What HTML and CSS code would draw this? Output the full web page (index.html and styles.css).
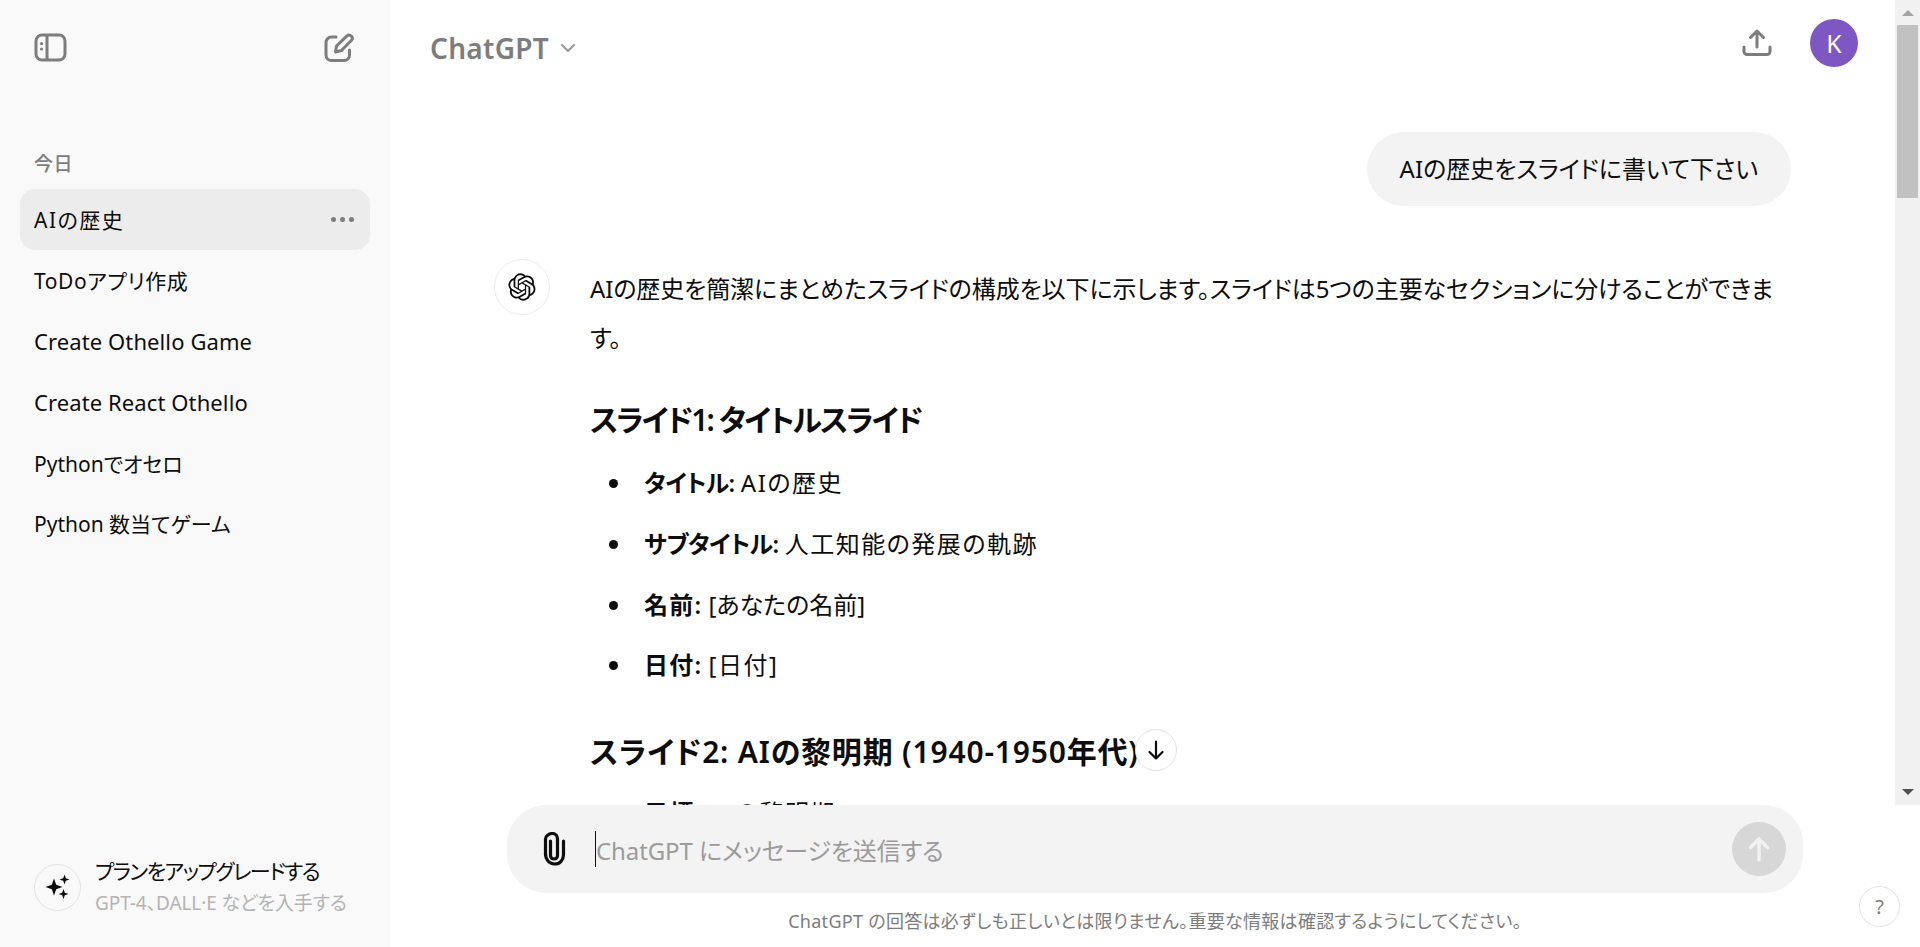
FILE: index.html
```html
<!DOCTYPE html>
<html lang="ja">

	<head>
		<meta charset="UTF-8">
		<title>ChatGPT</title>
		<link rel="stylesheet" href="styles.css">
	</head>

	<body>
		<div class="app">
			<aside class="sidebar">
				<div class="side-top">
					<svg class="icon-panel" width="34" height="30" viewBox="0 0 34 30" fill="none" stroke="#7d7d7d" stroke-width="3">
						<rect x="2" y="2" width="29" height="25" rx="6"/>
						<path d="M13 2v25"/>
						<circle cx="7.5" cy="10.5" r="1.6" fill="#7d7d7d" stroke="none"/>
						<circle cx="7.5" cy="16" r="1.6" fill="#7d7d7d" stroke="none"/>
					</svg>
					<svg class="icon-edit" width="30" height="30" viewBox="0 0 30 30" fill="none" stroke="#7d7d7d" stroke-width="3" stroke-linecap="round" stroke-linejoin="round">
						<path d="M12 4H7.5A5.5 5.5 0 0 0 2 9.500V22a5.500 5.500 0 0 0 5.500 5.500H20a5.500 5.500 0 0 0 5.500-5.500v-5"/>
						<path d="M23 2.800a3.200 3.200 0 0 1 4.500 4.500L17.500 17.500l-6 1.500 1-6z"/>
					</svg>
				</div>

				<div class="side-label">今日</div>
				<ul class="side-list">
					<li class="side-item active"><span class="wide">AIの歴史</span><span class="dots"><i></i><i></i><i></i></span></li>
					<li class="side-item"><span class="wide-s">ToDoアプリ作成</span></li>
					<li class="side-item latin">Create Othello Game</li>
					<li class="side-item latin">Create React Othello</li>
					<li class="side-item">Pythonでオセロ</li>
					<li class="side-item">Python 数当てゲーム</li>
				</ul>

				<div class="upgrade">
					<div class="upgrade-icon">
						<svg width="30" height="30" viewBox="0 0 30 30" fill="#0d0d0d">
							<path d="M11 6.500l2.200 6.300 6.300 2.200-6.300 2.200L11 23.500l-2.200-6.300L2.500 15l6.300-2.200z"/>
							<path d="M21.500 2.500l1.300 3.700 3.700 1.300-3.700 1.300-1.300 3.700-1.300-3.700-3.700-1.300 3.700-1.300z"/>
							<path d="M20.500 17l1.300 3.700 3.700 1.300-3.700 1.300-1.300 3.700-1.300-3.700-3.700-1.300 3.700-1.300z"/>
						</svg>
					</div>
					<div>
						<div class="upgrade-title">プランをアップグレードする</div>
						<div class="upgrade-sub">GPT-4、DALL·E などを入手する</div>
					</div>
				</div>
			</aside>

			<main class="main">
				<div class="thread-wrap">
					<div class="thread">
						<header class="topbar">
							<div class="model">ChatGPT
								<svg width="18" height="18" viewBox="0 0 18 18" fill="none" stroke="#9b9b9b" stroke-width="2.200" stroke-linecap="round" stroke-linejoin="round"><path d="M3 6l6 6 6-6"/></svg>
							</div>
							<svg class="icon-share" width="30" height="30" viewBox="0 0 30 30" fill="none" stroke="#7d7d7d" stroke-width="3" stroke-linecap="round" stroke-linejoin="round">
								<path d="M15 19V3M8.500 9.500L15 3l6.500 6.500"/>
								<path d="M2 19v4.500a3 3 0 0 0 3 3h20a3 3 0 0 0 3-3V19"/>
							</svg>
							<div class="avatar">K</div>
						</header>

						<div class="user-row">
							<div class="bubble">AIの歴史をスライドに書いて下さい</div>
						</div>

						<div class="answer">
							<div class="gpt-icon">
								<svg width="28" height="28" viewBox="0 0 41 41" fill="#0d0d0d">
									<path d="M37.5324 16.8707C37.9808 15.5241 38.1363 14.0974 37.9886 12.6859C37.8409 11.2744 37.3934 9.91076 36.676 8.68622C35.6126 6.83404 33.9882 5.3676 32.0373 4.4985C30.0864 3.62941 27.9098 3.40259 25.8215 3.85078C24.8796 2.7893 23.7219 1.94125 22.4257 1.36341C21.1295 0.785575 19.7249 0.491269 18.3058 0.500197C16.1708 0.495044 14.0893 1.16803 12.3614 2.42214C10.6335 3.67624 9.34853 5.44666 8.6917 7.47815C7.30085 7.76286 5.98686 8.3414 4.8377 9.17505C3.68854 10.0087 2.73073 11.0782 2.02839 12.312C0.956464 14.1591 0.498905 16.2988 0.721698 18.4228C0.944492 20.5467 1.83612 22.5449 3.268 24.1293C2.81966 25.4759 2.66413 26.9026 2.81182 28.3141C2.95951 29.7256 3.40701 31.0892 4.12437 32.3138C5.18791 34.1659 6.8123 35.6322 8.76321 36.5013C10.7141 37.3704 12.8907 37.5973 14.9789 37.1492C15.9208 38.2107 17.0786 39.0587 18.3747 39.6366C19.6709 40.2144 21.0755 40.5087 22.4946 40.4998C24.6307 40.5054 26.7133 39.8321 28.4418 38.5772C30.1704 37.3223 31.4556 35.5506 32.1119 33.5179C33.5027 33.2332 34.8167 32.6547 35.9659 31.821C37.115 30.9874 38.0728 29.9178 38.7752 28.684C39.8458 26.8371 40.3023 24.6979 40.0789 22.5748C39.8556 20.4517 38.9639 18.4544 37.5324 16.8707ZM22.4978 37.8849C20.7443 37.8874 19.0459 37.2733 17.6994 36.1501C17.7601 36.117 17.8666 36.0586 17.936 36.0161L25.9004 31.4156C26.1003 31.3019 26.2663 31.137 26.3813 30.9378C26.4964 30.7386 26.5563 30.5124 26.5549 30.2825V19.0542L29.9213 20.998C29.9389 21.0068 29.9541 21.0198 29.9656 21.0359C29.977 21.052 29.9842 21.0707 29.9867 21.0902V30.3889C29.9842 32.375 29.1946 34.2791 27.7909 35.6841C26.3872 37.0892 24.4838 37.8806 22.4978 37.8849ZM6.39227 31.0064C5.51397 29.4888 5.19742 27.7107 5.49804 25.9832C5.55718 26.0187 5.66048 26.0818 5.73461 26.1244L13.699 30.7248C13.8975 30.8408 14.1233 30.902 14.3532 30.902C14.583 30.902 14.8088 30.8408 15.0073 30.7248L24.731 25.1103V28.9979C24.7321 29.0177 24.7283 29.0376 24.7199 29.0556C24.7115 29.0736 24.6988 29.0893 24.6829 29.1012L16.6317 33.7497C14.9096 34.7416 12.8643 35.0097 10.9447 34.4954C9.02506 33.9811 7.38785 32.7263 6.39227 31.0064ZM4.29707 13.6194C5.17156 12.0998 6.55279 10.9364 8.19885 10.3327C8.19885 10.4013 8.19491 10.5228 8.19491 10.6071V19.808C8.19351 20.0378 8.25334 20.2638 8.36823 20.4629C8.48312 20.6619 8.64893 20.8267 8.84863 20.9404L18.5723 26.5542L15.206 28.4979C15.1894 28.5089 15.1703 28.5155 15.1505 28.5173C15.1307 28.5191 15.1107 28.516 15.0924 28.5082L7.04046 23.8557C5.32135 22.8601 4.06716 21.2235 3.55289 19.3046C3.03862 17.3858 3.30624 15.3413 4.29707 13.6194ZM31.955 20.0556L22.2312 14.4411L25.5976 12.4981C25.6142 12.4872 25.6333 12.4805 25.6531 12.4787C25.6729 12.4769 25.6928 12.4801 25.7111 12.4879L33.7631 17.1364C34.9967 17.849 36.0017 18.8982 36.6606 20.1613C37.3194 21.4244 37.6047 22.849 37.4832 24.2684C37.3617 25.6878 36.8382 27.0432 35.9743 28.1759C35.1103 29.3086 33.9415 30.1717 32.6047 30.6641C32.6047 30.5947 32.6047 30.4733 32.6047 30.3889V21.188C32.6066 20.9586 32.5474 20.7328 32.4332 20.5338C32.319 20.3348 32.154 20.1698 31.955 20.0556ZM35.3055 15.0128C35.2464 14.9765 35.1431 14.9142 35.069 14.8717L27.1045 10.2712C26.906 10.1554 26.6803 10.0943 26.4504 10.0943C26.2206 10.0943 25.9948 10.1554 25.7963 10.2712L16.0726 15.8858V11.9982C16.0715 11.9783 16.0753 11.9585 16.0837 11.9405C16.0921 11.9225 16.1048 11.9068 16.1207 11.8949L24.1719 7.25025C25.4053 6.53903 26.8158 6.19376 28.2383 6.25482C29.6608 6.31589 31.0364 6.78077 32.2044 7.59508C33.3723 8.40939 34.2842 9.53945 34.8334 10.8531C35.3826 12.1667 35.5464 13.6095 35.3055 15.0128ZM14.2424 21.9419L10.8752 19.9981C10.8576 19.9893 10.8423 19.9763 10.8309 19.9602C10.8195 19.9441 10.8122 19.9254 10.8098 19.9058V10.6071C10.8107 9.18295 11.2173 7.78848 11.9819 6.58696C12.7466 5.38544 13.8377 4.42659 15.1275 3.82264C16.4173 3.21869 17.8524 2.99464 19.2649 3.1767C20.6775 3.35876 22.0089 3.93941 23.1034 4.85067C23.0427 4.88379 22.937 4.94215 22.8668 4.98473L14.9024 9.58517C14.7025 9.69878 14.5366 9.86356 14.4215 10.0626C14.3065 10.2616 14.2466 10.4877 14.2479 10.7175L14.2424 21.9419ZM16.071 17.9991L20.4018 15.4978L24.7325 17.9975V22.9985L20.4018 25.4983L16.071 22.9985V17.9991Z"/>
								</svg>
							</div>
							<div class="answer-body">
								<p>AIの歴史を簡潔にまとめたスライドの構成を以下に示します。スライドは5つの主要なセクションに分けることができます。</p>
								<h3 class="tight">スライド1: タイトルスライド</h3>
								<ul>
									<li><b>タイトル:</b> <span class="wide">AIの歴史</span></li>
									<li><b>サブタイトル:</b> <span class="wide">人工知能の発展の軌跡</span></li>
									<li><b class="kanji">名前:</b> [あなたの名前]</li>
									<li><b class="kanji">日付:</b> <span class="wide">[日付]</span></li>
								</ul>
								<h3 class="loose">スライド2: AIの黎明期 (1940-1950年代)</h3>
								<ul class="next">
									<li><b class="kanji">目標:</b> <span class="wide">AIの黎明期</span></li>
								</ul>
							</div>
						</div>

						<div class="scroll-down">
							<svg width="24" height="24" viewBox="0 0 24 24" fill="none" stroke="#0d0d0d" stroke-width="2.200" stroke-linecap="round" stroke-linejoin="round"><path d="M12 3.500v17M5.500 14l6.500 6.500 6.500-6.500"/></svg>
						</div>
					</div>

					<div class="scrollbar">
						<div class="arrow-up"></div>
						<div class="thumb"></div>
						<div class="arrow-down"></div>
					</div>
				</div>

				<div class="composer-area">
					<div class="composer">
						<svg class="icon-clip" width="26" height="34" viewBox="0 0 26 34" fill="none" stroke="#0d0d0d" stroke-width="3.200" stroke-linecap="round" stroke-linejoin="round">
							<path d="M9.500 9v14.500c0 2 1.500 3.500 3.500 3.500s3.500-1.500 3.500-3.500V7c0-3.300-2-5.500-5-5.500S4.500 3.700 4.500 7v16"/>
							<path d="M4.500 22c0 5.500 3.500 10 9 10s9-4 9-9.500V9"/>
						</svg>
						<span class="caret"></span>
						<span class="placeholder">ChatGPT にメッセージを送信する</span>
						<div class="send">
							<svg width="28" height="28" viewBox="0 0 28 28" fill="none" stroke="#f1f1f1" stroke-width="3.600" stroke-linecap="round" stroke-linejoin="round"><path d="M14 25V4M5.500 12.500L14 4l8.500 8.500"/></svg>
						</div>
					</div>
					<div class="notice">ChatGPT の回答は必ずしも正しいとは限りません。重要な情報は確認するようにしてください。</div>
				</div>

				<div class="help">?</div>
			</main>
		</div>
	</body>

</html>
```

FILE: styles.css
```css
* {
	margin: 0;
	padding: 0;
	box-sizing: border-box;
}

ul, li {
	list-style: none;
}

html, body {
	height: 100%;
	overflow: hidden;
}

body {
	background: white;
	color: #0d0d0d;
	font-family: "Noto Sans", "Noto Sans CJK JP", sans-serif;
	font-feature-settings: "palt";
}

.app {
	display: flex;
	height: 947px;
}

.wide {
	letter-spacing: 1.5px;
}

.wide-s {
	letter-spacing: 0.6px;
}

/* sidebar */
.sidebar {
	display: flex;
	flex-direction: column;
	width: 390px;
	flex-shrink: 0;
	background: #f9f9f9;
	padding: 0 20px;
}

.side-top {
	display: flex;
	justify-content: space-between;
	align-items: center;
	height: 96px;
	padding: 0 16px 0 14px;
}

.side-label {
	height: 18px;
	margin-top: 59px;
	padding-left: 14px;
	line-height: 18px;
	font-size: 19px;
	font-weight: 500;
	letter-spacing: 0.4px;
	color: #7d7d7d;
}

.side-list {
	margin-top: 16px;
}

.side-item {
	display: flex;
	justify-content: space-between;
	align-items: center;
	height: 60.800px;
	padding: 0 16px 0 14px;
	font-size: 21px;
	border-radius: 15px;
}

.side-item.latin {
	font-size: 22px;
	letter-spacing: 0.100px;
}

.side-item.active {
	background: #ececec;
}

.dots {
	display: flex;
	gap: 4px;
}

.dots i {
	width: 5px;
	height: 5px;
	border-radius: 50%;
	background: #7d7d7d;
}

.upgrade {
	display: flex;
	align-items: center;
	gap: 14px;
	margin-top: auto;
	padding: 0 0 28px 14px;
}

.upgrade-icon {
	display: flex;
	align-items: center;
	justify-content: center;
	width: 47px;
	height: 47px;
	border: 1px solid #e3e3e3;
	border-radius: 50%;
}

.upgrade-title {
	font-size: 21px;
	line-height: 32px;
	letter-spacing: -1.500px;
}

.upgrade-sub {
	font-size: 19px;
	line-height: 32px;
	letter-spacing: -0.100px;
	color: #b4b4b4;
}

/* main */
.main {
	position: relative;
	display: flex;
	flex-direction: column;
	flex: 1;
	min-width: 0;
}

.thread-wrap {
	display: flex;
	height: 805px;
}

.thread {
	position: relative;
	flex: 1;
	overflow: hidden;
}

.topbar {
	display: flex;
	align-items: center;
	height: 96px;
	padding: 0 37px 0 40px;
}

.model {
	display: flex;
	align-items: center;
	gap: 10px;
	margin-right: auto;
	font-size: 28px;
	font-weight: 600;
	letter-spacing: 0.300px;
	color: #7d7d7d;
}

.icon-share {
	margin-right: 38px;
	margin-bottom: 10px;
}

.avatar {
	width: 48px;
	height: 48px;
	margin-bottom: 10px;
	line-height: 48px;
	border-radius: 50%;
	background: #7e57c2;
	color: white;
	font-size: 25px;
	text-align: center;
}

.user-row {
	display: flex;
	justify-content: flex-end;
	margin-top: 36px;
	padding-right: 104px;
}

.bubble {
	height: 74px;
	line-height: 74px;
	padding: 0 33px;
	border-radius: 37px;
	background: #f3f3f3;
	font-size: 24px;
}

.answer {
	display: flex;
	gap: 40px;
	margin-top: 53px;
	padding: 0 105px 0 104px;
}

.gpt-icon {
	display: flex;
	align-items: center;
	justify-content: center;
	width: 56px;
	height: 56px;
	flex-shrink: 0;
	border: 1px solid #ececec;
	border-radius: 50%;
}

.answer-body {
	flex: 1;
	padding-top: 5px;
	font-size: 24px;
	line-height: 49px;
}

.answer-body p {
	letter-spacing: -0.100px;
}

.answer-body b {
	font-weight: 600;
	letter-spacing: -0.600px;
}

.answer-body b.kanji {
	letter-spacing: 1.200px;
}

.answer-body h3 {
	margin-top: 33px;
	font-size: 30px;
	font-weight: 600;
	line-height: 49px;
}

.answer-body h3.tight {
	letter-spacing: -1.900px;
}

.answer-body h3.loose {
	margin-top: 31px;
	letter-spacing: 0.800px;
}

.answer-body ul {
	margin-top: 9px;
}

.answer-body ul.next {
	margin-top: 7px;
}

.answer-body li {
	position: relative;
	height: 60.800px;
	line-height: 60px;
	padding-left: 54px;
}

.answer-body li::before {
	content: "";
	position: absolute;
	left: 19px;
	top: 26px;
	width: 9px;
	height: 9px;
	border-radius: 50%;
	background: #0d0d0d;
}

.scroll-down {
	position: absolute;
	left: 745px;
	top: 729px;
	display: flex;
	align-items: center;
	justify-content: center;
	width: 42px;
	height: 42px;
	border: 1px solid #e3e3e3;
	border-radius: 50%;
	background: white;
}

/* scrollbar */
.scrollbar {
	display: flex;
	flex-direction: column;
	align-items: center;
	width: 25px;
	flex-shrink: 0;
	background: #f1f1f1;
}

.arrow-up {
	margin-top: 10px;
	border: 6px solid transparent;
	border-top: none;
	border-bottom: 6px solid #a3a3a3;
}

.thumb {
	width: 21px;
	height: 173px;
	margin-top: 9px;
	background: #c1c1c1;
}

.arrow-down {
	margin-top: auto;
	margin-bottom: 10px;
	border: 6px solid transparent;
	border-bottom: none;
	border-top: 6px solid #505050;
}

/* composer */
.composer {
	display: flex;
	align-items: center;
	width: 1296px;
	height: 88px;
	margin-left: 117px;
	padding: 0 17px 0 34px;
	border-radius: 39px;
	background: #f3f3f3;
}

.icon-clip {
	flex-shrink: 0;
}

.caret {
	width: 1px;
	height: 36px;
	margin-left: 28px;
	background: #0d0d0d;
}

.placeholder {
	margin-right: auto;
	font-size: 24px;
	letter-spacing: -0.100px;
	color: #9b9b9b;
}

.send {
	display: flex;
	align-items: center;
	justify-content: center;
	width: 54px;
	height: 54px;
	border-radius: 50%;
	background: #d7d7d7;
}

.notice {
	height: 54px;
	line-height: 56px;
	text-align: center;
	font-size: 18px;
	letter-spacing: 0.300px;
	color: #7d7d7d;
}

.help {
	position: absolute;
	right: 20px;
	bottom: 20px;
	width: 41px;
	height: 41px;
	line-height: 39px;
	border: 1px solid #e3e3e3;
	border-radius: 50%;
	text-align: center;
	font-size: 20px;
	color: #7d7d7d;
}
```
